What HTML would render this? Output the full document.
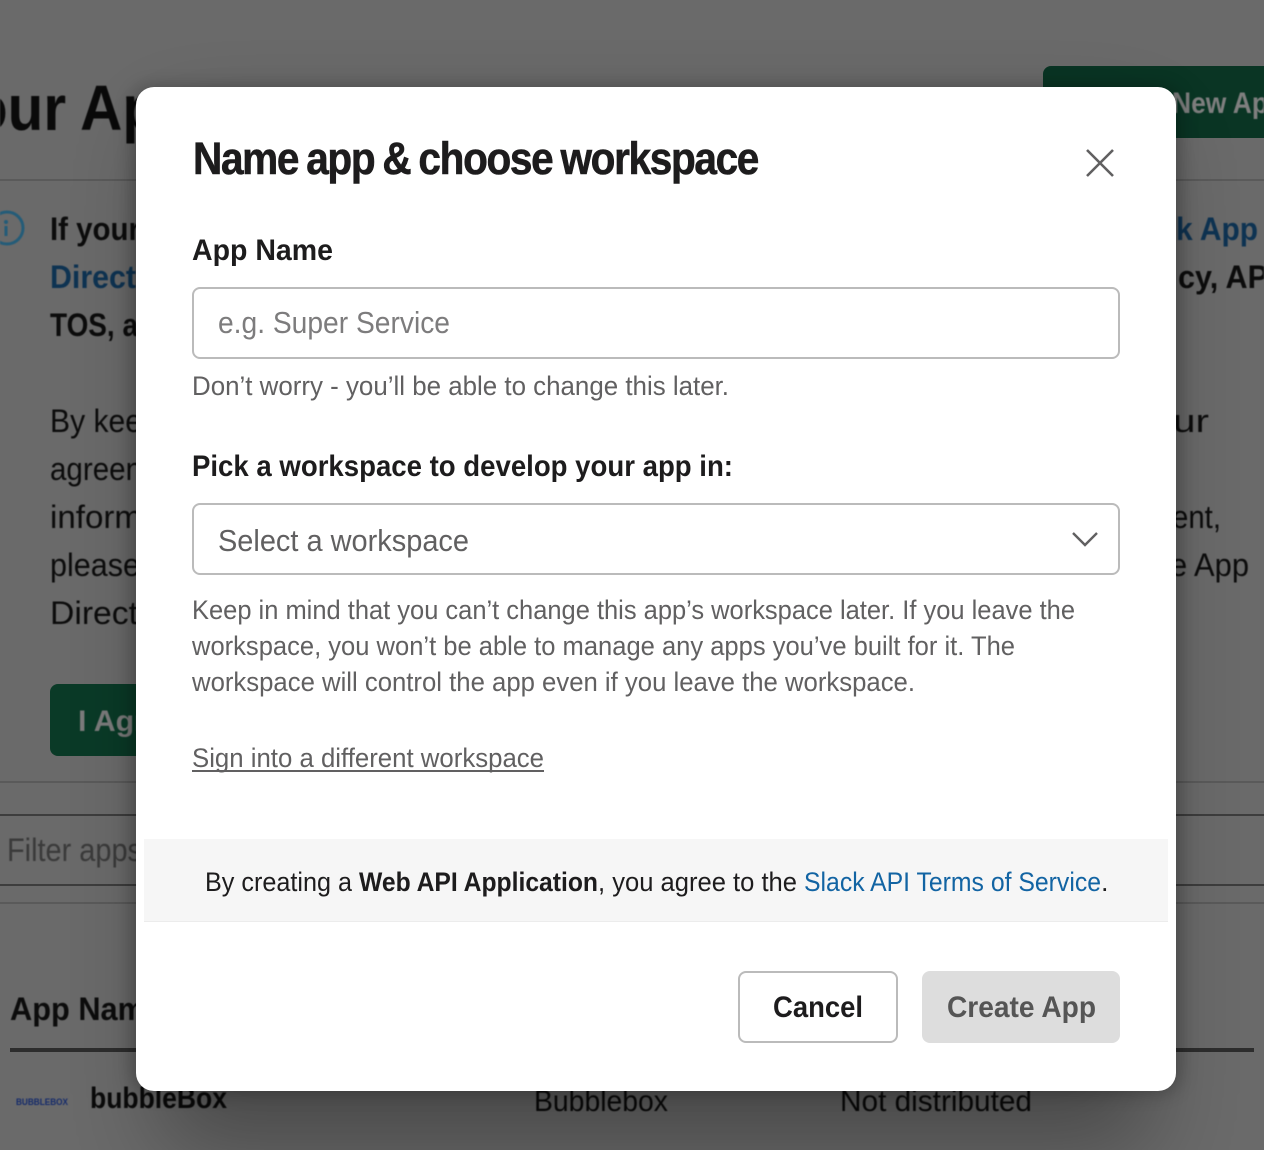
<!DOCTYPE html>
<html><head><meta charset="utf-8"><style>
html,body{margin:0;padding:0;width:1264px;height:1150px;overflow:hidden;background:#6a6a6a}
svg{display:block;position:absolute;left:0;top:0}
#back{filter:blur(.5px)}
text{font-family:"Liberation Sans",sans-serif}
.b{font-weight:700}
</style></head><body>
<svg width="1264" height="1150" viewBox="0 0 1264 1150" xmlns="http://www.w3.org/2000/svg">
<rect width="1264" height="1150" fill="#6a6a6a"/>
<rect x="1043" y="66" width="260" height="72" rx="8" fill="#0a3524"/>
<rect x="50" y="684" width="120" height="72" rx="8" fill="#0a3a27"/>
<rect x="0" y="179" width="1264" height="2" fill="#5a5a5a"/>
<rect x="0" y="781" width="1264" height="2" fill="#5a5a5a"/>
<rect x="0" y="814" width="1264" height="2" fill="#3d3d3d"/>
<rect x="0" y="884" width="1264" height="2" fill="#3d3d3d"/>
<rect x="0" y="902" width="1264" height="2" fill="#5a5a5a"/>
<rect x="10" y="1048" width="1244" height="4" fill="#2d2d2d"/>
</svg>
<svg id="back" width="1264" height="1150" viewBox="0 0 1264 1150" xmlns="http://www.w3.org/2000/svg">
<text class="b" x="-28" y="130" font-size="64" fill="#0a0a0a" textLength="186" lengthAdjust="spacingAndGlyphs">our Ap</text>
<text class="b" x="1172" y="113" font-size="30" fill="#7f7f7f" textLength="96" lengthAdjust="spacingAndGlyphs">New Ap</text>
<circle cx="7" cy="228" r="16" fill="none" stroke="#245c78" stroke-width="3"/>
<circle cx="6" cy="222" r="2" fill="#245c78"/><rect x="4.500" y="226" width="3" height="10" fill="#245c78"/>
<text class="b" x="50" y="240" font-size="32" fill="#0c0c0c" textLength="90" lengthAdjust="spacingAndGlyphs">If your</text>
<text class="b" x="50" y="288" font-size="32" fill="#0e3352" textLength="86" lengthAdjust="spacingAndGlyphs">Direct</text>
<text class="b" x="50" y="336" font-size="32" fill="#0c0c0c" textLength="88" lengthAdjust="spacingAndGlyphs">TOS, a</text>
<g font-size="32" fill="#0c0c0c">
<text x="50" y="432" textLength="92" lengthAdjust="spacingAndGlyphs">By kee</text>
<text x="50" y="480" textLength="92" lengthAdjust="spacingAndGlyphs">agreen</text>
<text x="50" y="528" textLength="92" lengthAdjust="spacingAndGlyphs">inform</text>
<text x="50" y="576" textLength="90" lengthAdjust="spacingAndGlyphs">please</text>
<text x="50" y="624" textLength="88" lengthAdjust="spacingAndGlyphs">Direct</text>
<text x="1173" y="432" textLength="36" lengthAdjust="spacingAndGlyphs">ur</text>
<text x="1172" y="528" textLength="49" lengthAdjust="spacingAndGlyphs">ent,</text>
<text x="1170" y="576" textLength="79" lengthAdjust="spacingAndGlyphs">e App</text>
</g>
<text class="b" x="1176" y="240" font-size="32" fill="#0e3352" textLength="82" lengthAdjust="spacingAndGlyphs">k App</text>
<text class="b" x="1178" y="288" font-size="32" fill="#0c0c0c" textLength="90" lengthAdjust="spacingAndGlyphs">cy, AP</text>
<text class="b" x="78" y="731" font-size="30" fill="#7b7b7b" textLength="68" lengthAdjust="spacingAndGlyphs">I Agr</text>
<text x="7" y="861" font-size="32" fill="#3a3a3a" textLength="135" lengthAdjust="spacingAndGlyphs">Filter apps</text>
<text class="b" x="10" y="1020" font-size="32" fill="#0c0c0c" textLength="135" lengthAdjust="spacingAndGlyphs">App Nam</text>
<text class="b" x="16" y="1105" font-size="9" fill="#142a6a" textLength="52" lengthAdjust="spacingAndGlyphs">BUBBLEBOX</text>
<text class="b" x="90" y="1108" font-size="30" fill="#0a0a0a" textLength="137" lengthAdjust="spacingAndGlyphs">bubbleBox</text>
<text x="534" y="1111" font-size="30" fill="#0a0a0a" textLength="134" lengthAdjust="spacingAndGlyphs">Bubblebox</text>
<text x="840" y="1111" font-size="30" fill="#0a0a0a" textLength="192" lengthAdjust="spacingAndGlyphs">Not distributed</text>
</svg>
<svg width="1264" height="1150" viewBox="0 0 1264 1150" xmlns="http://www.w3.org/2000/svg">
<defs>
<filter id="sh" x="-10%" y="-10%" width="120%" height="120%" color-interpolation-filters="sRGB"><feGaussianBlur stdDeviation="9"/></filter>
<filter id="sh2" x="-20%" y="-20%" width="140%" height="140%" color-interpolation-filters="sRGB"><feGaussianBlur stdDeviation="45"/></filter>
</defs>
<rect x="160" y="130" width="990" height="1020" rx="20" fill="#000" opacity=".3" filter="url(#sh2)"/>
<rect x="132" y="87" width="1048" height="1006" rx="20" fill="#000" opacity=".26" filter="url(#sh)"/>
<rect x="136" y="87" width="1040" height="1004" rx="18" fill="#fff"/>
<text class="b" x="193" y="174" font-size="45" fill="#1d1c1d" stroke="#1d1c1d" stroke-width=".6" letter-spacing="-1.500" word-spacing="-2" textLength="565" lengthAdjust="spacingAndGlyphs">Name app &amp; choose workspace</text>
<path d="M1087 150L1113 176M1113 150L1087 176" stroke="#616061" stroke-width="2.600" fill="none"/>
<text class="b" x="192" y="260" font-size="30" fill="#1d1c1d" textLength="141" lengthAdjust="spacingAndGlyphs">App Name</text>
<rect x="193" y="288" width="926" height="70" rx="7" fill="#fff" stroke="#bbb" stroke-width="2"/>
<text x="218" y="333" font-size="31" fill="#7d7c7d" textLength="232" lengthAdjust="spacingAndGlyphs">e.g. Super Service</text>
<text x="192" y="395" font-size="27" fill="#616061" textLength="537" lengthAdjust="spacingAndGlyphs">Don’t worry - you’ll be able to change this later.</text>
<text class="b" x="192" y="476" font-size="30" fill="#1d1c1d" textLength="541" lengthAdjust="spacingAndGlyphs">Pick a workspace to develop your app in:</text>
<rect x="193" y="504" width="926" height="70" rx="7" fill="#fff" stroke="#bbb" stroke-width="2"/>
<text x="218" y="551" font-size="31" fill="#616061" textLength="251" lengthAdjust="spacingAndGlyphs">Select a workspace</text>
<path d="M1073 533L1085 545L1097 533" stroke="#616061" stroke-width="2.400" fill="none"/>
<g font-size="27" fill="#616061">
<text x="192" y="619" textLength="883" lengthAdjust="spacingAndGlyphs">Keep in mind that you can’t change this app’s workspace later. If you leave the</text>
<text x="192" y="655" textLength="823" lengthAdjust="spacingAndGlyphs">workspace, you won’t be able to manage any apps you’ve built for it. The</text>
<text x="192" y="691" textLength="723" lengthAdjust="spacingAndGlyphs">workspace will control the app even if you leave the workspace.</text>
<text x="192" y="767" textLength="352" lengthAdjust="spacingAndGlyphs">Sign into a different workspace</text>
</g>
<rect x="192" y="770" width="352" height="2" fill="#616061"/>
<rect x="144" y="839" width="1024" height="83" fill="#f6f6f6"/>
<rect x="144" y="921" width="1024" height="1" fill="#ececec"/>
<g font-size="27" fill="#1d1c1d">
<text x="205" y="891" textLength="147" lengthAdjust="spacingAndGlyphs">By creating a</text>
<text class="b" x="359" y="891" textLength="239" lengthAdjust="spacingAndGlyphs">Web API Application</text>
<text x="598" y="891" textLength="199" lengthAdjust="spacingAndGlyphs">, you agree to the</text>
<text x="804" y="891" fill="#1264a3" textLength="297" lengthAdjust="spacingAndGlyphs">Slack API Terms of Service</text>
<text x="1101" y="891">.</text>
</g>
<rect x="739" y="972" width="158" height="70" rx="7" fill="#fff" stroke="#bbb" stroke-width="2"/>
<text class="b" x="773" y="1017" font-size="30" fill="#1d1c1d" textLength="90" lengthAdjust="spacingAndGlyphs">Cancel</text>
<rect x="922" y="971" width="198" height="72" rx="8" fill="#dddddd"/>
<text class="b" x="947" y="1017" font-size="30" fill="#555" textLength="149" lengthAdjust="spacingAndGlyphs">Create App</text>
</svg>
</body></html>
